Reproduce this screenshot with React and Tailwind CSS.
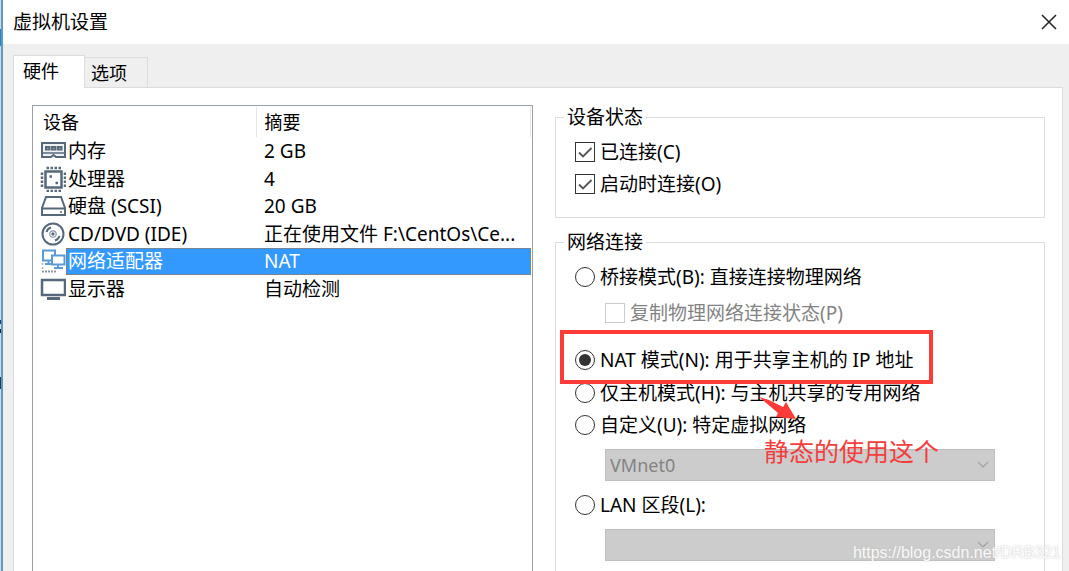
const iconProps = {
  width: 26,
  height: 26,
  viewBox: "0 0 26 26",
  fill: "none",
  stroke: "#566879",
  strokeWidth: 2,
  "aria-hidden": true,
};

function MemoryIcon() {
  return (
    <svg {...iconProps} className="shrink-0">
      <path d="M2 5h23v14h-9l-2.5 -2l-2.5 2h-9z" fill="#eef1f4" />
      <path d="M2 15h23" strokeWidth="1.5" />
      <path d="M6 9h3.500v2.500h-3.500zM12 9h3.500v2.500h-3.500zM18 9h3.500v2.500h-3.500z" />
    </svg>
  );
}

function CpuIcon() {
  return (
    <svg {...iconProps} className="shrink-0">
      <path d="M5.500 5.500h16v16h-16z" strokeWidth="2.500" />
      <path d="M6.500 2h15M6.500 25h15" strokeWidth="2.500" strokeDasharray="2.500 1.500" />
      <path d="M2 6.500v15M25 6.500v15" strokeWidth="2.500" strokeDasharray="2.500 1.500" />
      <path d="M9.500 10.500h2.500M15.500 17h2.500" strokeWidth="2.500" />
    </svg>
  );
}

function DiskIcon() {
  return (
    <svg {...iconProps} className="shrink-0">
      <path d="M6 4h15l4 11v7h-23v-7z" />
      <path d="M2 15.500h23" />
      <path d="M20 19h2" strokeWidth="1.500" />
    </svg>
  );
}

function DiscIcon() {
  return (
    <svg {...iconProps} className="shrink-0">
      <circle cx="13" cy="13" r="10.500" />
      <circle cx="13" cy="13" r="3.200" strokeWidth="1.200" stroke="#8a98a6" />
      <circle cx="13" cy="13" r="1.200" fill="#566879" strokeWidth="1" />
      <path d="M6.500 11c.8-2.500 2-3.800 4.500-4.500M19.500 15c-.8 2.500-2 3.800-4.500 4.500" />
    </svg>
  );
}

function NetworkIcon() {
  return (
    <svg {...iconProps} className="shrink-0" stroke="#5b9bd5">
      <path d="M3 2.500h12v10h-12z" />
      <path d="M8.500 13v3M5 16h7" />
      <path d="M12 7.500h12.500v9h-12.500z" fill="#fff" />
      <path d="M18 17v3M14 20h9" />
      <path d="M2.500 15v8" stroke="#9db4ca" strokeWidth="1.500" strokeDasharray="2 2" />
      <path d="M2 23.500h15" stroke="#8a98a8" strokeWidth="2" strokeDasharray="2 1" />
    </svg>
  );
}

function DisplayIcon() {
  return (
    <svg {...iconProps} className="shrink-0">
      <path d="M2 4h23v15h-23z" strokeWidth="2.500" />
      <path d="M7 22.500h13" strokeWidth="3" />
    </svg>
  );
}

const devices = [
  { name: "内存", summary: "2 GB", icon: MemoryIcon },
  { name: "处理器", summary: "4", icon: CpuIcon },
  { name: "硬盘 (SCSI)", summary: "20 GB", icon: DiskIcon },
  { name: "CD/DVD (IDE)", summary: "正在使用文件 F:\\CentOs\\Ce...", icon: DiscIcon },
  { name: "网络适配器", summary: "NAT", icon: NetworkIcon, selected: true },
  { name: "显示器", summary: "自动检测", icon: DisplayIcon },
];

function DeviceTable() {
  return (
    <table className="w-full table-fixed border-collapse text-left">
      <colgroup>
        <col className="w-[222px]" />
        <col />
      </colgroup>
      <thead>
        <tr className="h-[30px] text-[18px]">
          <th className="border-r border-[#e5e5e5] p-0 pl-[9px] font-normal">设备</th>
          <th className="border-r border-[#e5e5e5] p-0 pl-2 font-normal">摘要</th>
        </tr>
      </thead>
      <tbody>
        {devices.map(({ name, summary, icon: Icon, selected }) => (
          <tr key={name} className="odd:h-7 even:h-[27px]">
            <td className="p-0">
              <div className="flex h-[27px] items-center pl-[6px]">
                <Icon />
                <span
                  className={
                    selected
                      ? "flex h-[27px] flex-1 items-center border-y border-l border-dotted border-[#b87333] bg-[#3399ff] pl-px text-white"
                      : "flex-1 pl-0.5"
                  }
                >
                  {name}
                </span>
              </div>
            </td>
            <td className="p-0">
              <div
                className={
                  selected
                    ? "flex h-[27px] items-center border-y border-r border-dotted border-[#b87333] bg-[#3399ff] pl-2 text-white"
                    : "flex h-[27px] items-center pl-2 whitespace-nowrap"
                }
              >
                {summary}
              </div>
            </td>
          </tr>
        ))}
      </tbody>
    </table>
  );
}

function Checkbox({ label, ...props }) {
  return (
    <label className="flex items-center gap-[5px] has-disabled:text-[#838383]">
      <span className="grid size-5 shrink-0">
        <input
          type="checkbox"
          className="peer col-start-1 row-start-1 size-5 appearance-none border border-[#333] bg-white disabled:border-[#ccc]"
          {...props}
        />
        <svg
          viewBox="0 0 20 20"
          className="pointer-events-none invisible col-start-1 row-start-1 size-5 peer-checked:visible"
          fill="none"
          stroke="#555"
          strokeWidth="1.8"
        >
          <path d="M4 10.500l4 4l8.500-8.500" />
        </svg>
      </span>
      {label}
    </label>
  );
}

function Radio({ label, ...props }) {
  return (
    <label className="flex items-center gap-[5px] whitespace-nowrap">
      <span className="grid size-5 shrink-0 place-items-center">
        <input
          type="radio"
          name="network"
          className="peer col-start-1 row-start-1 size-5 appearance-none rounded-full border border-[#333] bg-white"
          {...props}
        />
        <span className="pointer-events-none invisible col-start-1 row-start-1 size-3 rounded-full bg-[#333] peer-checked:visible" />
      </span>
      {label}
    </label>
  );
}

function Dropdown({ label, value }) {
  return (
    <div className="ml-[30px] grid max-w-[390px]">
      <select
        aria-label={label}
        disabled
        className="col-start-1 row-start-1 h-8 appearance-none border border-[#bfbfbf] bg-[#ccc] px-1 text-[18px] text-[#838383] opacity-100"
      >
        <option>{value}</option>
      </select>
      <svg
        viewBox="0 0 12 8"
        className="pointer-events-none col-start-1 row-start-1 mr-[6px] h-2 w-3 self-center justify-self-end"
        fill="none"
        stroke="#a0a0a0"
        strokeWidth="1.2"
      >
        <path d="M1 1l5 5l5-5" />
      </svg>
    </div>
  );
}

// Sliver of the window that sits behind the dialog
function WindowEdge() {
  return (
    <div className="flex w-[3px] shrink-0 flex-col border-r-2 border-[#5b9bc8] bg-[#d5d9dd]">
      <span className="mt-[29px] h-[17px] bg-[#2f7fc4]" />
      <span className="mt-[274px] h-1 bg-[#173a6b]" />
      <span className="mt-[5px] h-1 bg-[#222]" />
      <span className="mt-[44px] h-3 bg-[#2b3a4d]" />
    </div>
  );
}

export default function App() {
  return (
    <div className="relative flex h-screen overflow-hidden bg-[#efefef] font-['Noto_Sans','Noto_Sans_CJK_SC',sans-serif] text-[19px] leading-6 text-black">
      <WindowEdge />

      <main className="flex min-w-0 flex-1 flex-col">
        <header className="flex h-11 shrink-0 items-center justify-between bg-white pr-3 pl-[10px]">
          <h1>虚拟机设置</h1>
          <button type="button" aria-label="关闭" className="size-4">
            <svg viewBox="0 0 16 16" stroke="#222" strokeWidth="1.5">
              <path d="M1 1l14 14M15 1L1 15" />
            </svg>
          </button>
        </header>

        <div
          role="tablist"
          className="z-10 mt-[11px] ml-[10px] flex h-8 shrink-0 items-end text-[18px]"
        >
          <button
            type="button"
            role="tab"
            aria-selected="true"
            className="-mb-px h-[33px] w-[72px] border border-b-0 border-[#dcdcdc] bg-white pr-3 pb-[2px] pl-[9px] text-left"
          >
            硬件
          </button>
          <button
            type="button"
            role="tab"
            aria-selected="false"
            className="h-[30px] w-[63px] border border-b-0 border-l-0 border-[#dcdcdc] pl-[6px] text-left"
          >
            选项
          </button>
        </div>

        <div className="mr-[6px] ml-[10px] flex flex-1 gap-[22px] border border-b-0 border-[#dcdcdc] bg-white pt-[17px] pr-[17px] pl-[18px]">
          <section className="w-[501px] shrink-0 border border-b-0 border-[#9aa0a8] p-px">
            <DeviceTable />
          </section>

          <div className="min-w-0 flex-1">
            <fieldset className="h-[113px] border border-[#dcdcdc] pl-[19px]">
              <legend className="-ml-[11px] px-[3px]">设备状态</legend>
              <div className="flex flex-col gap-2 pt-[11px]">
                <Checkbox label="已连接(C)" defaultChecked />
                <Checkbox label="启动时连接(O)" defaultChecked />
              </div>
            </fieldset>

            <fieldset className="mt-3 h-[400px] border border-[#dcdcdc] pl-[19px]">
              <legend className="-ml-[11px] px-[3px]">网络连接</legend>
              <div className="flex flex-col pt-[11px]">
                <Radio label="桥接模式(B): 直接连接物理网络" />
                <div className="mt-3 ml-[30px]">
                  <Checkbox label="复制物理网络连接状态(P)" disabled />
                </div>
                <div className="relative mt-[23px]">
                  <Radio label="NAT 模式(N): 用于共享主机的 IP 地址" defaultChecked />
                  <div className="pointer-events-none absolute -top-[18px] -left-[15px] h-[54px] w-[373px] border-4 border-[#ff3b38]" />
                </div>
                <div className="mt-[9px]">
                  <Radio label="仅主机模式(H): 与主机共享的专用网络" />
                </div>
                <div className="relative mt-2">
                  <Radio label="自定义(U): 特定虚拟网络" />
                  <svg
                    viewBox="0 0 40 28"
                    className="pointer-events-none absolute -top-[17px] left-[182px] h-7 w-10"
                    fill="#ff3b38"
                  >
                    <path d="M2 1L12 4L26 11L29 6L39 23L19 21L21 17z" />
                  </svg>
                  <p className="pointer-events-none absolute top-6 left-[189px] z-10 text-[25px] leading-7 whitespace-nowrap text-[#f43e3e]">
                    静态的使用这个
                  </p>
                </div>
                <div className="mt-3">
                  <Dropdown label="自定义虚拟网络" value="VMnet0" />
                </div>
                <div className="mt-3">
                  <Radio label="LAN 区段(L):" />
                </div>
                <div className="mt-3">
                  <Dropdown label="LAN 区段" value="" />
                </div>
              </div>
            </fieldset>
          </div>
        </div>
      </main>

      <p className="pointer-events-none absolute right-2 bottom-[6px] z-20 font-['Liberation_Sans',sans-serif] text-base text-white/90 [text-shadow:0_0_2px_#bbb]">
        https://blog.csdn.net/DRB321
      </p>
    </div>
  );
}
